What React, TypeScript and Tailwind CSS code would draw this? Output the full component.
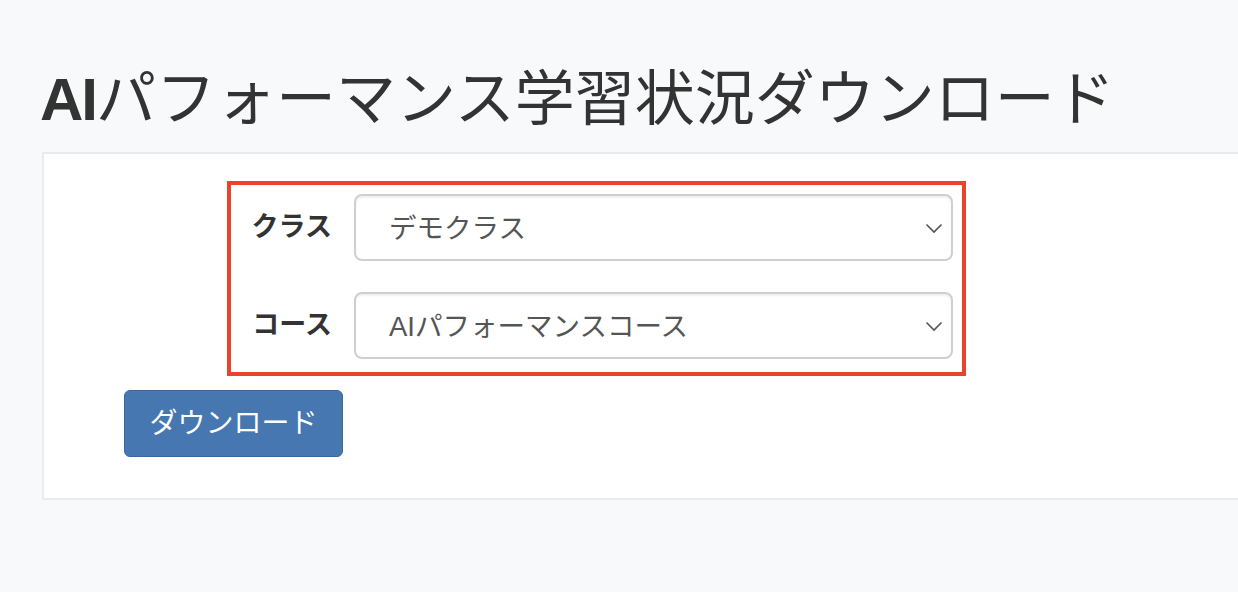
const jp = { fontFamily: '"Liberation Sans", "Noto Sans CJK JP", sans-serif' }

function Chevron() {
  return (
    <svg width="18" height="11" viewBox="0 0 18 11" className="shrink-0">
      <polyline points="1.5,1.5 9,9 16.5,1.5" fill="none" stroke="#555" strokeWidth="1.6" />
    </svg>
  )
}

function Field({ label, value }: { label: string; value: string }) {
  return (
    <div className="flex items-center">
      <div className="w-[101px] shrink-0 text-right text-[27px] font-bold text-[#333]">{label}</div>
      <div className="ml-[22px] flex h-[67px] w-[599px] items-center justify-between rounded-[8px] border-2 border-[#cfcfcf] bg-white pl-[33px] pr-[8px] pt-[2px] text-[27.5px] text-[#555] shadow-[inset_0_2px_2px_rgba(0,0,0,0.06)]">
        <span>{value}</span>
        <Chevron />
      </div>
    </div>
  )
}

export default function App() {
  return (
    <div className="min-h-[592px] overflow-hidden bg-[#f8f9fa]" style={jp}>
      <h1 className="pl-[40px] pt-[64px] text-[60px] leading-[72px] font-normal text-[#333] whitespace-nowrap">
        <span className="font-bold tracking-[-2px]">AI</span>パフォーマンス学習状況ダウンロード
      </h1>
      <div className="ml-[42px] mt-[16px] border-y-2 border-l-2 border-[#ebebeb] bg-white pt-[27px] pb-[41px]">
        <div className="ml-[183px] flex w-[739px] flex-col gap-[31px] border-4 border-[#e8442b] pt-[9px] pb-[13px]">
          <Field label="クラス" value="デモクラス" />
          <Field label="コース" value="AIパフォーマンスコース" />
        </div>
        <button className="ml-[80px] mt-[14px] h-[67px] w-[219px] rounded-[6px] border border-[#3b689c] bg-[#4677b0] text-[28px] text-white">
          ダウンロード
        </button>
      </div>
    </div>
  )
}
